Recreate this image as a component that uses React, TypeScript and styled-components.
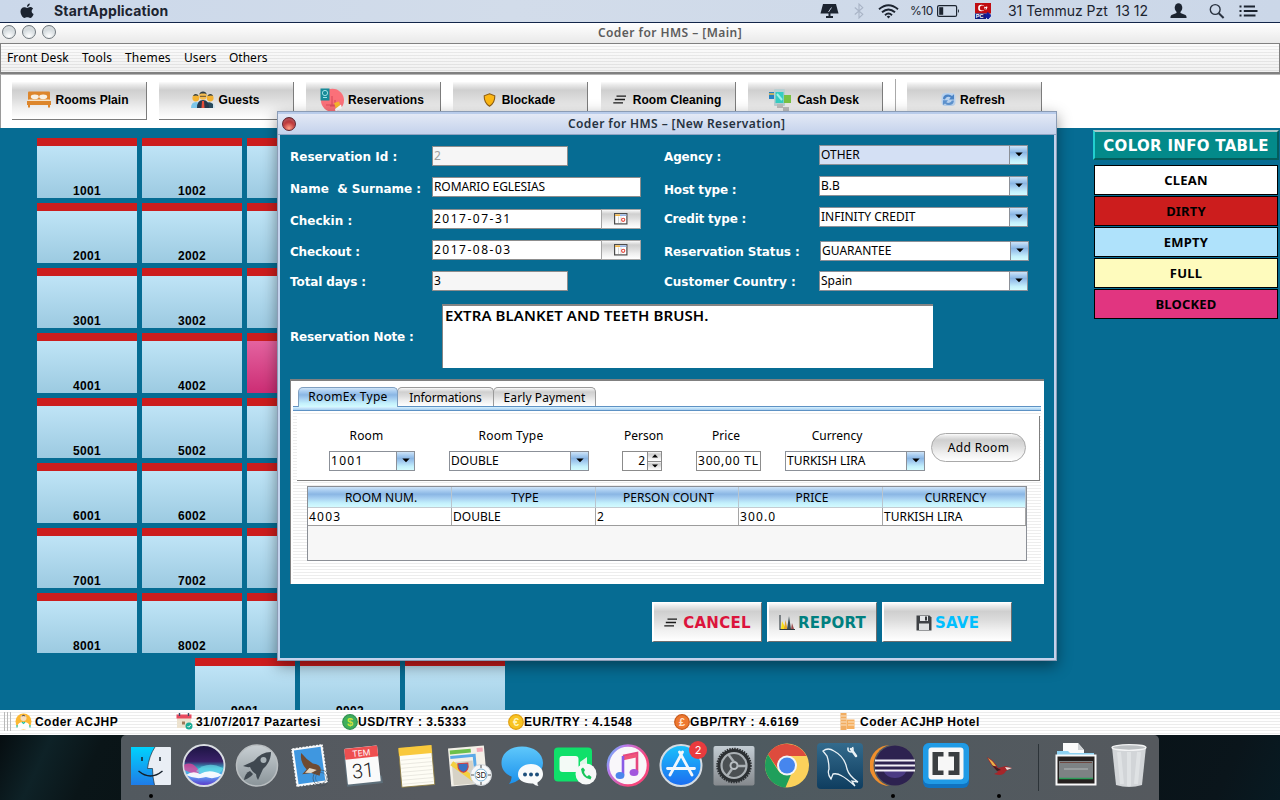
import React from "react";
import styled, { createGlobalStyle, css } from "styled-components";

const lucida = `"Noto Sans", "Open Sans", sans-serif`;
const verdana = `"DejaVu Sans", Verdana, sans-serif`;
const arial = `"Liberation Sans", Arial, sans-serif`;
const system = `Inter, Roboto, sans-serif`;
const teal = "#066c93";

const metal = "linear-gradient(#fbfbfb 0%, #e9e9e9 8%, #cfcfcf 22%, #dcdcdc 45%, #efefef 70%, #ffffff 100%)";
const aqua = "linear-gradient(#cfe4f8 0%, #a9cdf0 18%, #8ab6e4 36%, #a4cdf0 55%, #c3f0fc 80%, #d3fbff 100%)";
const stripes = "repeating-linear-gradient(#ffffff 0 2px, #ededed 2px 3px)";

const Global = createGlobalStyle`
  *, *::before, *::after { box-sizing: border-box; }
  html, body { margin: 0; padding: 0; background: #08161b; }
  svg { display: block; flex: none; }
`;

const Screen = styled.div`
  position: relative;
  display: flex;
  flex-direction: column;
  width: 1280px;
  height: 800px;
  overflow: hidden;
  color: #000;
  font: 12px/16px ${lucida};
  white-space: pre;
`;

/* ---------- system menu bar ---------- */

const SystemBar = styled.header`
  display: flex;
  align-items: center;
  height: 23px;
  flex: none;
  padding-left: 20px;
  background: linear-gradient(90deg, #cbd8ea, #d2dcea 40%, #cbd7e8);
  border-bottom: 1px solid #13264a;
  color: #1c2430;
  font-family: ${system};
`;

const AppName = styled.strong`
  margin-left: 20px;
  font-size: 14px;
  font-weight: 700;
  letter-spacing: 0.15px;
`;

const StatusIcons = styled.div`
  display: flex;
  align-items: center;
  margin-left: auto;
  padding-right: 22px;
`;

const Slot = styled.div<{ $gap: number }>`
  display: flex;
  align-items: center;
  margin-left: ${(p) => p.$gap}px;
`;

const Percent = styled.span`
  width: 23px;
  font-size: 12px;
  letter-spacing: -0.5px;
`;

const Clock = styled.span`
  width: 140px;
  font-size: 14px;
  letter-spacing: -0.03px;
`;

/* ---------- main window ---------- */

const Title = styled.h1<{ $dialog?: boolean }>`
  margin: 0;
  font: 600 12px/16px ${lucida};
  letter-spacing: ${(p) => (p.$dialog ? "0.4px" : "0.45px")};
  color: ${(p) => (p.$dialog ? "#26323f" : "#5c5c5c")};
`;

const WindowTitle = styled.div`
  position: relative;
  display: flex;
  align-items: center;
  justify-content: center;
  flex: none;
  height: 20px;
  padding-left: 60px;
  background: linear-gradient(#ffffff, #e9e9e9);
`;

const Lights = styled.div`
  position: absolute;
  left: 2px;
  top: 2px;
  display: flex;
  gap: 6px;
`;

const Light = styled.i<{ $red?: boolean }>`
  flex: none;
  width: 14px;
  height: 14px;
  border-radius: 50%;
  border: 1px solid ${(p) => (p.$red ? "#5d2530" : "#6f777d")};
  background: ${(p) =>
    p.$red
      ? "radial-gradient(circle at 50% 85%, #ff9f86, #c03a3c 50%, #8e2029)"
      : "radial-gradient(circle at 50% 85%, #ffffff, #d9dfe2 50%, #a9b2b8)"};
  box-shadow: inset 0 2px 2px rgba(255, 255, 255, ${(p) => (p.$red ? 0.2 : 0.45)});
`;

const MenuStrip = styled.nav`
  display: flex;
  align-items: center;
  flex: none;
  height: 31px;
  padding: 0 6px;
  gap: 13px;
  border: 1px solid #808080;
  border-bottom-width: 2px;
  background: linear-gradient(rgba(255, 255, 255, 0.3), rgba(200, 200, 200, 0.18)), repeating-linear-gradient(#fafafa 0 2px, #e4e4e4 2px 3px);
`;

const MenuEntry = styled.span<{ $width: number; $track: number }>`
  width: ${(p) => p.$width}px;
  letter-spacing: ${(p) => p.$track}px;
`;

const Toolbar = styled.div`
  display: flex;
  flex: none;
  height: 54px;
  padding: 7px 11px 0;
  gap: 12px;
  background: #fff;
  border-top: 1px solid #b5b5b5;
  border-left: 1px solid #9a9a9a;
`;

const ToolButton = styled.button<{ $gap?: number; $push?: number }>`
  display: flex;
  align-items: center;
  justify-content: center;
  gap: ${(p) => p.$gap ?? 4}px;
  width: 135px;
  height: 38px;
  margin-left: ${(p) => p.$push ?? 0}px;
  padding: 0 2px 2px 0;
  border: 0;
  border-right: 1px solid #7c7c7c;
  border-bottom: 1px solid #7c7c7c;
  background: ${metal};
  font: 700 12px/16px ${arial};
  letter-spacing: 0.04px;
  white-space: pre;
`;

const ToolDivider = styled.i`
  width: 1px;
  margin: -3px -1px 0 0;
  background: #a9a9a9;
`;

const Desk = styled.main`
  display: flex;
  justify-content: space-between;
  flex: none;
  height: 582px;
  overflow: hidden;
  background: ${teal};
`;

const Rooms = styled.section`
  display: flex;
  flex-direction: column;
  gap: 5px;
  padding: 10px 0 0 37px;
`;

const RoomRow = styled.div<{ $indent?: number }>`
  display: flex;
  flex: none;
  gap: 5px;
  padding-left: ${(p) => p.$indent ?? 0}px;
`;

const RoomTile = styled.div<{ $blocked?: boolean }>`
  display: flex;
  align-items: flex-end;
  justify-content: center;
  width: 100px;
  height: 60px;
  border-top: 8px solid #cc1d1d;
  background: ${(p) => (p.$blocked ? "linear-gradient(#e463a0, #cc2d74)" : "linear-gradient(#bfe4f6, #9ccae1)")};
  font: 700 12px/13px ${arial};
  letter-spacing: 0.3px;
`;

const Legend = styled.aside`
  display: flex;
  flex-direction: column;
  width: 187px;
  padding: 2px 1px 0 0;
`;

const LegendHead = styled.div`
  height: 30px;
  margin-bottom: 5px;
  border: 2px solid;
  border-color: #a9c6c8 #045c5c #045c5c #22cfcf;
  background: #038a8a;
  color: #fff;
  font: 700 15px/28px ${verdana};
  letter-spacing: 0.3px;
  text-align: center;
`;

const LegendItem = styled.div<{ $color: string }>`
  height: 30px;
  margin: 0 1px;
  margin-bottom: 1px;
  border: 1px solid #000;
  background: ${(p) => p.$color};
  font: 700 13px/29px ${lucida};
  letter-spacing: 0.2px;
  text-align: center;
`;

/* ---------- status strip ---------- */

const StatusStrip = styled.footer`
  display: flex;
  align-items: center;
  flex: none;
  height: 25px;
  padding: 0 0 2px 4px;
  background: repeating-linear-gradient(#ffffff 0 2px, #ececec 2px 3px);
  font: 700 12px/16px ${arial};
`;

const Grip = styled.i`
  width: 7px;
  height: 19px;
  border: solid #b9b9b9;
  border-width: 0 1px;
  background: linear-gradient(90deg, transparent 2px, #b9b9b9 2px 3px, transparent 3px);
`;

const StatusItem = styled.div<{ $width: number; $gap: number; $track: number }>`
  display: flex;
  align-items: center;
  gap: ${(p) => p.$gap}px;
  width: ${(p) => p.$width}px;
  letter-spacing: ${(p) => p.$track}px;
`;

/* ---------- reservation dialog ---------- */

const Dialog = styled.section`
  position: absolute;
  left: 277px;
  top: 111px;
  width: 780px;
  height: 550px;
  display: flex;
  flex-direction: column;
  border: 1px solid #8b9cb5;
  box-shadow: inset 0 0 0 2px #c3d2ec, 0 5px 14px rgba(0, 0, 0, 0.42);
  background: ${teal};
`;

const DialogTitle = styled.div`
  display: flex;
  align-items: center;
  flex: none;
  height: 23px;
  padding: 2px 3px 0 4px;
  gap: 272px;
  border-bottom: 1px solid #8fa3c2;
  background: linear-gradient(#b9cceb 0 2px, #e3e9f6 2px, #c4d2ec);
`;

const DialogBody = styled.div`
  flex: 1;
  display: flex;
  flex-direction: column;
  padding: 10px 12px 0;
`;

const FormColumns = styled.div`
  display: flex;
  align-items: flex-start;
  height: 159px;
`;

const Column = styled.div<{ $width: number; $top?: number }>`
  width: ${(p) => p.$width}px;
  padding-top: ${(p) => p.$top ?? 0}px;
`;

const FieldRow = styled.div<{ $after: number }>`
  display: flex;
  height: 20px;
  margin-bottom: ${(p) => p.$after}px;
`;

const Label = styled.label<{ $width: number; $drop?: number; $track?: number }>`
  width: ${(p) => p.$width}px;
  padding-top: ${(p) => p.$drop ?? 2}px;
  color: #fff;
  font: 700 12px/16px ${verdana};
  letter-spacing: ${(p) => p.$track ?? 0}px;
`;

const Input = styled.div<{ $width: number; $muted?: boolean; $track?: number; $readonly?: boolean }>`
  width: ${(p) => p.$width}px;
  height: 20px;
  padding-left: 1px;
  border: 1px solid #8d8d8d;
  background: ${(p) => (p.$muted || p.$readonly ? "#f6f6f6" : "#fff")};
  color: ${(p) => (p.$muted ? "#a0a0a0" : "#000")};
  line-height: 18px;
  letter-spacing: ${(p) => p.$track ?? 0}px;
  overflow: hidden;
`;

const PickerButton = styled.button`
  display: flex;
  align-items: center;
  justify-content: center;
  width: 40px;
  height: 20px;
  margin-left: -1px;
  padding: 0;
  border: 1px solid #a5a5a5;
  background: ${metal};
`;

const ComboBox = styled.div<{ $width: number; $active?: boolean; $track?: number; $shift?: number }>`
  display: flex;
  justify-content: space-between;
  width: ${(p) => p.$width}px;
  height: 20px;
  margin-left: ${(p) => p.$shift ?? 0}px;
  padding-left: 1px;
  border: 1px solid #8b9098;
  background: ${(p) => (p.$active ? "#d4e0f4" : "#fff")};
  line-height: 18px;
  letter-spacing: ${(p) => p.$track ?? 0}px;
`;

const ComboArrow = styled.span`
  display: flex;
  align-items: center;
  justify-content: center;
  width: 18px;
  padding-bottom: 1px;
  border-left: 1px solid #8b9098;
  background: ${aqua};
`;

const NoteRow = styled.div`
  display: flex;
  height: 75px;
`;

const NoteArea = styled.div`
  width: 491px;
  height: 64px;
  border: solid #858585;
  border-width: 2px 0 0 1px;
  padding-left: 2px;
  background: #fff;
  font: 600 15px/18px ${lucida};
  letter-spacing: 0.08px;
`;

const TabPanel = styled.div`
  display: flex;
  flex-direction: column;
  flex: none;
  width: 754px;
  height: 205px;
  padding: 6px 3px 3px 2px;
  border: solid #808080;
  border-width: 2px 0 0 1px;
  background: #fff;
`;

const Tabs = styled.div`
  display: flex;
  flex: none;
  height: 19px;
  padding-left: 5px;
`;

const Tab = styled.div<{ $width: number; $track: number; $active?: boolean }>`
  width: ${(p) => p.$width}px;
  height: ${(p) => (p.$active ? 20 : 19)}px;
  margin-right: -1px;
  border: 1px solid ${(p) => (p.$active ? "#7f9fc0" : "#9a9a9a")};
  border-bottom: 0;
  border-radius: 5px 5px 0 0;
  background: ${(p) => (p.$active ? aqua : metal)};
  line-height: ${(p) => (p.$active ? 17 : 19)}px;
  letter-spacing: ${(p) => p.$track}px;
  text-align: center;
  ${(p) => p.$active && css`position: relative; z-index: 1;`}
`;

const TabRule = styled.i`
  flex: none;
  height: 5px;
  border: solid #5e92c4;
  border-width: 1px 0;
  background: linear-gradient(#d8f2ff, #a5cdf0);
`;

const TabContent = styled.div`
  flex: 1;
  padding: 5px 1px 0 4px;
  background: ${stripes};
`;

const RoomForm = styled.div`
  display: flex;
  height: 65px;
  padding: 12px 0 0 32px;
  border: solid #7f7f7f;
  border-width: 0 1px 1px 0;
  background: #fff;
`;

const Cell = styled.div<{ $width: number; $gap: number }>`
  flex: none;
  width: ${(p) => p.$width}px;
  margin-right: ${(p) => p.$gap}px;
`;

const CellLabel = styled.div<{ $trim?: number; $lead?: number; $track?: number }>`
  height: 23px;
  padding-right: ${(p) => p.$trim ?? 0}px;
  padding-left: ${(p) => p.$lead ?? 0}px;
  line-height: 16px;
  letter-spacing: ${(p) => p.$track ?? 0.2}px;
  text-align: center;
`;

const Spinner = styled.div`
  display: flex;
  width: 40px;
  height: 20px;
  border: 1px solid #8b8b8b;
  line-height: 18px;
`;

const SpinnerValue = styled.span`
  flex: 1;
  padding-right: 2px;
  text-align: right;
`;

const SpinnerArrows = styled.span`
  display: flex;
  flex-direction: column;
  width: 14px;
  border-left: 1px solid #8b8b8b;
`;

const SpinnerArrow = styled.span`
  flex: 1;
  display: flex;
  align-items: center;
  justify-content: center;
  background: ${metal};
  & + & {
    border-top: 1px solid #8b8b8b;
  }
`;

const AddButton = styled.button`
  width: 95px;
  height: 29px;
  margin-top: 5px;
  padding: 0;
  border: 1px solid #a9a9a9;
  border-radius: 15px;
  background: ${metal};
  font: 12px/16px ${lucida};
  letter-spacing: 0.35px;
`;

const Table = styled.div`
  width: 720px;
  height: 75px;
  margin: 5px 0 0 10px;
  border: 1px solid #8b8f96;
  background: #f7f7f7;
`;

const TableRow = styled.div<{ $head?: boolean }>`
  display: grid;
  grid-template-columns: 144px 144px 143px 144px 143px;
  height: ${(p) => (p.$head ? 21 : 18)}px;
  border-bottom: 1px solid ${(p) => (p.$head ? "#c4ccd2" : "#9c9c9c")};
  background: ${(p) => (p.$head ? aqua : "#fff")};
`;

const TableCell = styled.div<{ $head?: boolean; $track?: number }>`
  border-right: 1px solid ${(p) => (p.$head ? "#b9c5cf" : "#a5a5a5")};
  padding-left: ${(p) => (p.$head ? 3 : 1)}px;
  line-height: ${(p) => (p.$head ? 21 : 17)}px;
  text-align: ${(p) => (p.$head ? "center" : "left")};
  letter-spacing: ${(p) => p.$track ?? 0}px;
`;

const Actions = styled.div`
  display: flex;
  gap: 5px;
  padding: 18px 0 0 362px;
`;

const Action = styled.button<{ $width: number; $color: string; $gap?: number }>`
  display: flex;
  align-items: center;
  justify-content: center;
  gap: ${(p) => p.$gap ?? 3}px;
  width: ${(p) => p.$width}px;
  height: 40px;
  padding: 1px 0 0;
  border: solid;
  border-width: 1px 1px 1px 2px;
  border-color: #fff #6e6e6e #6e6e6e #fff;
  background: ${metal};
  color: ${(p) => p.$color};
  font: 700 15px/20px ${verdana};
  letter-spacing: 0.25px;
`;

/* ---------- dock ---------- */

const DockArea = styled.div`
  flex: 1;
  padding-left: 121px;
  background: linear-gradient(115deg, #060d10, #0e2227 4%, #0a1518 8%, #050b0d 50%, #0a151b 95%, #081a22);
`;

const Dock = styled.div`
  display: flex;
  width: 1038px;
  height: 65px;
  padding-left: 3px;
  border-radius: 5px 5px 0 0;
  background: linear-gradient(90deg, #52595f, #565a60 30%, #4e5a60 60%, #55595e);
`;

const DockSlot = styled.div<{ $running?: boolean }>`
  position: relative;
  display: flex;
  flex-direction: column;
  align-items: center;
  width: 53px;
  padding-top: 8px;
  ${(p) =>
    p.$running &&
    css`
      &::after {
        content: "";
        width: 4px;
        height: 4px;
        margin-top: 5px;
        border-radius: 50%;
        background: #000;
      }
    `}
`;

const DockDivider = styled.i`
  width: 1px;
  height: 47px;
  margin: 9px 10px 0 13px;
  background: #2c3338;
`;

const Badge = styled.span`
  position: absolute;
  right: 0;
  top: 6px;
  width: 18px;
  height: 18px;
  border-radius: 50%;
  background: #e93b3e;
  color: #fff;
  font: 11px/18px ${system};
  text-align: center;
`;

/* ---------- small drawings ---------- */

const Apple = () => (
  <svg width="14" height="17" viewBox="0 0 14 17" fill="#1c2430">
    <path d="M9.8 0.6C9.9 2.2 8.6 3.8 7 3.9C6.8 2.3 8.3 0.7 9.8 0.6Z" />
    <path d="M7.1 4.9C7.9 4.9 8.8 4.1 10.2 4.1C11.4 4.1 12.5 4.8 13.1 5.7C11 7 11.3 10 13.6 10.9C13 12.8 11.6 15 10.2 15C9.1 15 8.6 14.3 7.3 14.3C6 14.3 5.4 15 4.4 15C2.7 15 .5 11.5 .5 8.6C.5 5.8 2.2 4.2 4.1 4.2C5.4 4.2 6.3 4.9 7.1 4.9Z" />
  </svg>
);
const Monitor = () => (
  <svg width="19" height="16" viewBox="0 0 19 16">
    <path d="M3 1H16L18.500 10.500H.5Z" fill="#1c2430" />
    <path d="M8.500 10H10.500V13H13V15H6V13H8.500Z" fill="#1c2430" />
    <path d="M8.500 9L11.500 4.500" stroke="#cfd9e9" strokeWidth=".9" />
  </svg>
);
const Bluetooth = () => (
  <svg width="10" height="16" viewBox="0 0 10 16" fill="none" stroke="#a9b4c6" strokeWidth="1.1">
    <path d="M.8 4.500L8.800 11.300L5 15V1L8.800 4.700L.8 11.500" />
  </svg>
);
const Wifi = () => (
  <svg width="21" height="15" viewBox="0 0 21 15" fill="none" stroke="#1c2430" strokeWidth="1.900">
    <path d="M1 5.200Q10.500 -2.800 20 5.200" />
    <path d="M4 8.300Q10.500 2.600 17 8.300" />
    <path d="M7 11.200Q10.500 8 14 11.200" />
    <path d="M10.500 14.500L8.700 12.600Q10.500 11 12.300 12.600Z" fill="#1c2430" stroke="none" />
  </svg>
);
const Battery = () => (
  <svg width="23" height="12" viewBox="0 0 23 12">
    <rect x=".6" y=".6" width="19" height="10.800" rx="1.500" fill="none" stroke="#1c2430" strokeWidth="1.200" />
    <rect x="2.200" y="2.200" width="4" height="7.600" fill="#1c2430" />
    <path d="M21 4Q23 6 21 8Z" fill="#1c2430" />
  </svg>
);
const Flag = () => (
  <svg width="16" height="16" viewBox="0 0 16 16">
    <rect width="16" height="10.500" fill="#c00d12" />
    <rect y="10.500" width="11" height="5.500" fill="#101c7c" />
    <circle cx="6.300" cy="5" r="3.200" fill="#fff" />
    <circle cx="7.300" cy="5" r="2.500" fill="#c00d12" />
    <path d="M9 5L12 3.800L11 6.500L12 4.500Z" stroke="#fff" fill="#fff" strokeWidth=".7" />
    <text x=".8" y="15.400" fontSize="5.500" fontWeight="700" fontFamily="Liberation Sans, sans-serif" fill="#fff">PC</text>
    <path d="M13 9.500L16 12.500L13 16L9.800 12.500Z" fill="#101c9c" stroke="#101c9c" />
  </svg>
);
const Person = () => (
  <svg width="17" height="16" viewBox="0 0 17 16" fill="#1c2430">
    <ellipse cx="8.500" cy="4.800" rx="3.800" ry="4.500" />
    <path d="M6.500 8H10.500V10L15.500 12Q16.600 12.600 16.600 15H.4Q.4 12.600 1.500 12L6.500 10Z" />
  </svg>
);
const Search = () => (
  <svg width="16" height="16" viewBox="0 0 16 16" fill="none" stroke="#2a3340" strokeWidth="1.400">
    <circle cx="6.200" cy="6.500" r="4.900" />
    <path d="M9.800 10.200L14.600 15" strokeWidth="2" />
  </svg>
);
const List = () => (
  <svg width="19" height="12" viewBox="0 0 19 12" stroke="#1c2430" strokeWidth="1.900">
    <path d="M.5 1.500H2.500M4.800 1.500H16M.5 6H2.500M4.800 6H18.500M.5 10.500H2.500M4.800 10.500H16.500" />
  </svg>
);

const Bed = () => (
  <svg width="24" height="17" viewBox="0 0 24 17">
    <rect x="1" y=".5" width="22" height="10" rx="1" fill="#dd862c" />
    <ellipse cx="7.800" cy="5.800" rx="4" ry="2.400" fill="#f8f1e4" />
    <ellipse cx="16.200" cy="5.800" rx="4" ry="2.400" fill="#f8f1e4" />
    <path d="M1.500 8.500H22.500L24 10.500H0Z" fill="#f6e3c8" />
    <path d="M0 10H24V14H23V16.500H21V14H3V16.500H1V14H0Z" fill="#dd862c" />
  </svg>
);
const People = () => (
  <svg width="24" height="17" viewBox="0 0 24 17">
    <path d="M0 17Q0 11 5 11Q10 11 10 17Z" fill="#7cc6ea" />
    <path d="M14 17Q14 11 19 11Q24 11 24 17Z" fill="#cfe3ee" />
    <path d="M15 17V12Q19 10 22 13V17Z" fill="#27495c" />
    <path d="M6 17Q6 9 12 9Q18 9 18 17Z" fill="#27394c" />
    <path d="M11 10H13L13.500 17H10.500Z" fill="#e34d3a" />
    <circle cx="4.800" cy="7" r="3.400" fill="#f3b233" />
    <circle cx="19.200" cy="7" r="3.400" fill="#f3b233" />
    <circle cx="12" cy="5" r="3.800" fill="#f7bd50" />
    <path d="M8.200 3.500Q9 .5 12 .5Q15 .5 15.800 3.500L14 2.500H10Z" fill="#2f3e46" />
    <path d="M2 5Q3 3 4.500 3Q7 3 7.500 5L5 4.500ZM16.500 5Q17.500 3 19.300 3Q21.500 3 22 5L20 4.500Z" fill="#2f3e46" />
    <path d="M9 5.300H15" stroke="#333" strokeWidth=".8" />
  </svg>
);
const Passport = () => (
  <svg width="24" height="24" viewBox="0 0 24 24">
    <circle cx="12.500" cy="12.300" r="11.500" fill="#fb7079" />
    <path d="M12 8V18M6 17H15V12M15 18H10" stroke="#dc4e5d" fill="none" strokeWidth="1.200" />
    <rect x=".5" y=".5" width="9" height="12" fill="#178a98" />
    <circle cx="5" cy="5" r="2.600" fill="none" stroke="#9fe0e4" />
    <path d="M3 9.500H7" stroke="#9fe0e4" />
    <path d="M14 15L19 13.500L20.500 18L16 21Z" fill="#f7b52c" />
    <path d="M15 21L21 16.500L22 20Q19 23 15.500 23.500Z" fill="#fff" />
  </svg>
);
const Shield = () => (
  <svg width="13" height="14" viewBox="0 0 13 14">
    <path d="M6.500 .8L11.800 2.800Q12 10 6.500 13.200Q1 10 1.200 2.800Z" fill="#fcb714" stroke="#8d5d13" strokeWidth="1.100" />
  </svg>
);
const Lines = () => (
  <svg width="14" height="9" viewBox="0 0 14 9" stroke="#1a1a1a" strokeWidth="1.300">
    <path d="M3.500 1.200H13M1.800 4.500H12M.3 7.800H10" />
  </svg>
);
const Cash = () => (
  <svg width="22" height="24" viewBox="0 0 22 24">
    <rect x="0" y="4" width="9" height="7" fill="#2781c2" />
    <path d="M0 6H9" stroke="#f2c14c" strokeWidth="1.500" />
    <rect x="5" y="1" width="11" height="17" rx="1" fill="#b8cfd2" />
    <rect x="6.500" y="4" width="8" height="11" fill="#35cdc2" />
    <path d="M8 6L13 12" stroke="#9ff1e8" strokeWidth="2" />
    <rect x="15" y="7" width="7" height="8" fill="#79c143" />
    <path d="M8 16H14V20H8ZM14 19H20V23H14Z" fill="#bcbcbc" />
  </svg>
);
const Refresh = () => (
  <svg width="15" height="15" viewBox="0 0 15 15">
    <rect x=".5" y="1" width="14" height="13" rx="4" fill="#b9d2ee" />
    <path d="M2 7Q2 2.500 7 2.500Q9.500 2.500 11 4L13 2.300V7.500H8L9.700 5.500Q8 4.200 6 5Q4.500 5.800 4 7.500Z" fill="#4b83c4" />
    <path d="M13 8.500Q12.500 13 8 13Q5.500 13 4 11.500L2 13V8.200H7L5.300 10.200Q7 11.500 9 10.500Q10.300 10 10.800 8.500Z" fill="#5e93cf" />
  </svg>
);
const CalendarGlyph = () => (
  <svg width="14" height="12" viewBox="0 0 14 12">
    <rect x=".6" y=".6" width="12.300" height="10.300" fill="#fff" stroke="#4c4c4c" strokeWidth="1.200" />
    <path d="M1 2.200H6" stroke="#f2b23c" strokeWidth="1.500" />
    <path d="M6 2.200H12.500" stroke="#93b3e6" strokeWidth="1.500" />
    <path d="M4.500 3.500V10M7 3.500V10" stroke="#d5d5d5" />
    <circle cx="9.200" cy="6.800" r="1.600" fill="#fff" stroke="#e4493f" strokeWidth="1.100" />
  </svg>
);
const Down = () => (
  <svg width="8" height="5" viewBox="0 0 8 5">
    <path d="M.3 .5H7.700L4 4.300Z" fill="#000" />
  </svg>
);
const Tiny = ({ up }: { up?: boolean }) => (
  <svg width="6" height="4" viewBox="0 0 6 4">
    <path d={up ? "M0 3.4L3 .3L6 3.4Z" : "M0 .4H6L3 3.6Z"} fill="#000" />
  </svg>
);
const Chart = () => (
  <svg width="16" height="16" viewBox="0 0 16 16">
    <path d="M2 14L3 6L5 10L7 14Z" fill="#f7de18" />
    <path d="M5 14L6.500 5L8.500 14Z" fill="#e5a52a" />
    <path d="M8 14L10 1L12 14Z" fill="#3d4f55" />
    <path d="M12 14L13 8L15 14Z" fill="#9c4d4d" />
    <path d="M1 0V14.500H16" stroke="#2f3a40" fill="none" strokeWidth="1.100" />
  </svg>
);
const Floppy = () => (
  <svg width="16" height="16" viewBox="0 0 16 16">
    <path d="M.5 .5H13.500L15.500 2.500V15.500H.5Z" fill="#3f4246" />
    <rect x="4" y="1" width="8" height="5" fill="#e4e6e8" />
    <rect x="9" y="1.500" width="2" height="4" fill="#34373a" />
    <rect x="3" y="8.500" width="10" height="6.500" fill="#dfe1e2" />
  </svg>
);
const UserRound = () => (
  <svg width="17" height="17" viewBox="0 0 17 17">
    <circle cx="8.500" cy="8.500" r="8" fill="#fcb732" />
    <circle cx="8.500" cy="5" r="3" fill="#f6ddbe" />
    <path d="M6.500 3.500Q7 1.800 8.500 1.800Q10 1.800 10.500 3.500L8.500 3Z" fill="#5c5550" />
    <path d="M2.500 16V13Q3 9 8.500 9Q14 9 14.500 13V16Z" fill="#fdfdfd" />
    <path d="M2 12V14.500M15 12V14.500M7 9L8.500 10.500L10 9" stroke="#23c1a5" strokeWidth="1.200" fill="none" />
  </svg>
);
const DateGlyph = () => (
  <svg width="17" height="17" viewBox="0 0 17 17">
    <rect x="1" y="5" width="14" height="10" fill="#ece2cf" />
    <rect x=".5" y="1.500" width="15" height="4" fill="#e84a5f" />
    <path d="M3.500 0V3M12.500 0V3" stroke="#3a4b66" strokeWidth="1.400" />
    <rect x="6" y="8.500" width="3" height="3" fill="#9d7b5b" />
    <circle cx="13" cy="13" r="3.500" fill="#1cac95" />
    <path d="M11.500 13L12.700 14.200L14.700 12" stroke="#fff" fill="none" />
  </svg>
);
const Coin = ({ fill, ring, sign, ink }: { fill: string; ring: string; sign: string; ink: string }) => (
  <svg width="16" height="16" viewBox="0 0 16 16">
    <circle cx="8" cy="8" r="7.300" fill={fill} stroke={ring} strokeWidth="1.200" />
    <text x="8" y="12" textAnchor="middle" fontSize="11" fontWeight="700" fontFamily="Liberation Sans, sans-serif" letterSpacing="0" fill={ink}>
      {sign}
    </text>
  </svg>
);
const Hotel = () => (
  <svg width="15" height="17" viewBox="0 0 15 17">
    <rect x=".5" y="0" width="6" height="17" fill="#f1ad62" />
    <rect x="6.500" y="6.500" width="8" height="9.500" fill="#f6b060" />
    <path d="M1 3H6.500M1 6H6.500M1 9H6.500M1 12H6.500M8 9H14M8 12H14" stroke="#fbe3c4" strokeWidth="1" />
  </svg>
);

/* ---------- dock drawings ---------- */

const Art = ({ children }: { children: React.ReactNode }) => (
  <svg width="46" height="46" viewBox="-1 -1 46 46">
    {children}
  </svg>
);

const Finder = () => (
  <Art>
    <defs>
      <linearGradient id="finderBlue" x2="0" y2="1">
        <stop stopColor="#00d2fd" />
        <stop offset="1" stopColor="#1f7ce8" />
      </linearGradient>
    </defs>
    <rect x="2" y="3" width="40" height="38" rx="1" fill="#e9eef5" />
    <path d="M2 3H26Q20 12 18.500 24.500H23.500Q23.500 33 25.500 41H2Z" fill="url(#finderBlue)" />
    <path d="M26 3Q20 12 18.500 24.500H23.500Q23.500 33 25.500 41" fill="none" stroke="#1d2c3a" strokeWidth=".7" />
    <path d="M13 13V17M31 13V17" stroke="#15202b" strokeWidth="1.500" />
    <path d="M9.500 27Q21.500 37 33.500 27" fill="none" stroke="#15202b" strokeWidth="1.400" />
  </Art>
);
const Siri = () => (
  <Art>
    <defs>
      <linearGradient id="siri" x2="0" y2="1">
        <stop stopColor="#1a1440" />
        <stop offset=".4" stopColor="#3a2168" />
        <stop offset=".58" stopColor="#35b5cf" />
        <stop offset=".75" stopColor="#5fa4f6" />
        <stop offset="1" stopColor="#5a32c8" />
      </linearGradient>
    </defs>
    <circle cx="22" cy="21.500" r="20.500" fill="url(#siri)" stroke="#d9dde2" strokeWidth="1.800" />
    <path d="M2 21Q9 17 15 24Q20 28 14 31Q7 28 2.500 26Z" fill="#e83f9a" opacity=".75" />
    <path d="M14 27Q25 16 41 24Q40 30 30 31Q20 32 14 27Z" fill="#6fe3ef" opacity=".6" />
    <path d="M4 31Q11 26 18 30Q28 24 40 31Q32 36 24 33Q14 36 4 31Z" fill="#fff" opacity=".92" />
  </Art>
);
const Rocket = () => (
  <Art>
    <defs>
      <linearGradient id="launch" x2="0" y2="1">
        <stop stopColor="#c9d0d4" />
        <stop offset="1" stopColor="#8a9499" />
      </linearGradient>
    </defs>
    <circle cx="22" cy="21.500" r="20.500" fill="url(#launch)" stroke="#b9bec1" strokeWidth="1.500" />
    <path d="M36 8Q26 8 19 17L8 22Q12 23.500 15 23Q17 28 21 30Q21 33 23 36L28 25Q36 18 36 8Z" fill="#3f4850" />
    <circle cx="28.500" cy="16" r="3" fill="#a9b3b8" />
    <path d="M15 27Q10 29 9 36Q15 34 18 30Z" fill="#3f4850" />
  </Art>
);
const Stamp = () => (
  <Art>
    <g transform="rotate(-8 22 21)">
      <rect x="5.500" y="2" width="32" height="39" fill="#f8f9fa" />
      <rect x="5.500" y="2" width="32" height="39" fill="none" stroke="#50585e" strokeWidth="1.300" strokeDasharray="1.200 2.200" />
      <rect x="8" y="4.500" width="27" height="34" fill="#3f97e0" />
      <path d="M15 8Q12 16 18 25L13 29L22 29L30 33L32 28Q33 22 25 20Q19 15 15 8Z" fill="#6f4a31" />
      <path d="M16 28L21 24L28 27L22 29Z" fill="#e4d6c2" />
    </g>
    <circle cx="33" cy="34" r="8" fill="none" stroke="#3f4c58" strokeWidth=".9" opacity=".7" />
    <circle cx="33" cy="34" r="5.500" fill="none" stroke="#3f4c58" strokeWidth=".9" opacity=".5" />
  </Art>
);
const Calendar = () => (
  <Art>
    <g transform="rotate(-6 22 21)">
      <path d="M4 9L4 41H40L39.500 34Z" fill="#5e6f7a" />
      <rect x="5" y="3" width="33" height="36" rx="1" fill="#fafafa" />
      <path d="M5 3H38V14H5Z" fill="#ee4f50" />
      <text x="21.500" y="12" textAnchor="middle" fontSize="8.500" fontFamily="Inter, sans-serif" fill="#fff">TEM</text>
      <text x="21.500" y="33.500" textAnchor="middle" fontSize="20" fontWeight="300" fontFamily="Roboto, sans-serif" fill="#222">31</text>
    </g>
  </Art>
);
const Notes = () => (
  <Art>
    <g transform="rotate(-5 22 21)">
      <rect x="6" y="3" width="33" height="39" fill="#fefdf5" stroke="#8c7a3b" strokeWidth=".8" />
      <rect x="6" y="2.500" width="33" height="8" fill="#f9c93c" />
      {[15, 19, 23, 27, 31, 35, 39].map((y) => (
        <path key={y} d={`M7 ${y}H38`} stroke="#e2e0d8" strokeWidth=".7" />
      ))}
    </g>
  </Art>
);
const Maps = () => (
  <Art>
    <g transform="rotate(-5 20 21)">
      <rect x="2.500" y="3" width="36" height="38" fill="#f3f0e8" />
      <path d="M4 5H25V9H4Z" fill="#6cc04c" />
      <path d="M31 5H37V9H31Z" fill="#f2a9b8" />
      <path d="M4 12H28V41" fill="none" stroke="#5ba9e8" strokeWidth="3" />
      <path d="M5 17H26V40H5Z" fill="#d6d2c6" />
      <path d="M5 18L26 36" stroke="#f4d041" strokeWidth="5" />
      <path d="M11 19H21V23Q20 27 16 28Q12 27 11 23Z" fill="#3971c2" stroke="#d83c3c" />
    </g>
    <circle cx="34" cy="31" r="10.500" fill="#f7f8f9" stroke="#cfd4d8" />
    <circle cx="34" cy="31" r="6" fill="#fff" stroke="#6aa9cf" strokeWidth=".9" />
    <path d="M34 21V24M34 38V41M24 31H27M41 31H44" stroke="#555" strokeWidth="1.100" />
    <text x="34" y="34" textAnchor="middle" fontSize="8" fontFamily="Inter, sans-serif" fill="#222">3D</text>
  </Art>
);
const Messages = () => (
  <Art>
    <defs>
      <linearGradient id="chat" x2="0" y2="1">
        <stop stopColor="#5fc8fb" />
        <stop offset="1" stopColor="#1a90ec" />
      </linearGradient>
    </defs>
    <path d="M22 2.500C33.500 2.500 43 9 43 19C43 29 33.500 35.500 20 35Q15 39 9 40Q12 36 11.500 32.500C5 30 1.500 25 1.500 19C1.500 9 10.500 2.500 22 2.500Z" fill="url(#chat)" />
    <path d="M31 20C38.500 20 43 24.500 43 30C43 34 40.500 36.500 37.500 38.500Q37 40 38.500 42Q35 41.500 33 39.500C24 40 18 36 18 30.500C18 24.500 23.500 20 31 20Z" fill="#f8fafb" />
    <g fill="#1d4f7c">
      <circle cx="25" cy="30.500" r="2" />
      <circle cx="31" cy="30.500" r="2" />
      <circle cx="37" cy="30.500" r="2" />
    </g>
  </Art>
);
const FaceTime = () => (
  <Art>
    <rect x="1" y="3.500" width="38" height="34" rx="4" fill="#0fe06a" />
    <rect x="6.500" y="12" width="19" height="16" rx="3" fill="#f3faf6" />
    <path d="M27 18L34 13V27L27 22Z" fill="#dff6e8" />
    <circle cx="33" cy="30" r="10.500" fill="#f6f8f7" />
    <path d="M28 25Q29 34 37.500 35.500L38.500 33L36 31L34 32.500Q31.500 30.500 31 28L32 26L30 23.500Z" fill="#18c65b" />
  </Art>
);
const Music = () => (
  <Art>
    <defs>
      <linearGradient id="tune" x2="1" y2=".6">
        <stop stopColor="#4fc0f4" />
        <stop offset=".3" stopColor="#b77cf0" />
        <stop offset=".8" stopColor="#f5467d" />
      </linearGradient>
    </defs>
    <circle cx="22" cy="21.500" r="20" fill="#f9f7fa" stroke="url(#tune)" strokeWidth="2.600" />
    <path d="M17 12L31 9V28" fill="none" stroke="#e6477f" strokeWidth="2.600" />
    <path d="M17 14.500L31 11.500" stroke="#f0557a" strokeWidth="3.500" />
    <path d="M17 12V31" stroke="#8a5be6" strokeWidth="2.600" />
    <ellipse cx="14" cy="31.500" rx="4.400" ry="3.500" fill="#4b86ec" />
    <ellipse cx="28" cy="28.500" rx="4.400" ry="3.500" fill="#a257dd" />
  </Art>
);
const Store = () => (
  <Art>
    <defs>
      <linearGradient id="store" x2="0" y2="1">
        <stop stopColor="#1cc2fb" />
        <stop offset="1" stopColor="#1c6cf0" />
      </linearGradient>
    </defs>
    <circle cx="22" cy="21.500" r="20.500" fill="url(#store)" stroke="#d6dce2" strokeWidth="2" />
    <g stroke="#f2f7fc" strokeWidth="2.800" fill="none" strokeLinecap="round">
      <path d="M23.500 8L11 31M20.500 8L33 31M8.500 24.500H35.500" />
    </g>
  </Art>
);
const Settings = () => (
  <Art>
    <defs>
      <linearGradient id="steel" x2="0" y2="1">
        <stop stopColor="#c3cdd4" />
        <stop offset="1" stopColor="#85898d" />
      </linearGradient>
    </defs>
    <rect x="1.500" y="2" width="41" height="39.500" rx="2" fill="url(#steel)" />
    <circle cx="22" cy="21.500" r="16.500" fill="#2c3033" stroke="#2c3033" strokeWidth="2.500" strokeDasharray="1.500 1" />
    <circle cx="22" cy="21.500" r="12.500" fill="#4b5053" stroke="#aab0b4" strokeWidth="2.200" />
    <circle cx="22" cy="21.500" r="3.500" fill="none" stroke="#b9bfc3" strokeWidth="2" />
    <path d="M22 18L16 10M25.500 22H34M20 25L15 32" stroke="#aab0b4" strokeWidth="2.400" />
  </Art>
);
const Chrome = () => (
  <Art>
    <circle cx="22" cy="21.500" r="22" fill="#fbd15b" />
    <path d="M3 10.500A22 22 0 0 1 41.500 12H22Q15 12 13 25Z" fill="#de4b3d" />
    <path d="M3 10.500L13.500 27Q17 32 26 30.500L20.500 43.500A22 22 0 0 1 3 10.500Z" fill="#1f9f5b" />
    <circle cx="22" cy="21.500" r="10" fill="#f4f6f8" />
    <circle cx="22" cy="21.500" r="8" fill="#4686ee" />
  </Art>
);
const Dolphin = () => (
  <Art>
    <defs>
      <linearGradient id="sea" x2="0" y2="1">
        <stop stopColor="#336b8d" />
        <stop offset="1" stopColor="#0f3d5f" />
      </linearGradient>
    </defs>
    <rect x="-1" y="-1" width="46" height="46" rx="4" fill="url(#sea)" />
    <path d="M5 7Q10 3 16 7Q27 13 29 25Q31 32 40 38L34 37L37 42Q28 34 24 32Q19 29 15 30L13 35Q9 30 11 25Q11 18 9 12Z" fill="none" stroke="#eaf2f6" strokeWidth="1.300" />
    <path d="M33 5L38 12" stroke="#eaf2f6" strokeWidth="2.600" strokeLinecap="round" />
    <path d="M30 3.500Q29.500 8 33 8Q36 6.500 34.500 3" stroke="#eaf2f6" strokeWidth="1.600" fill="none" />
  </Art>
);
const Eclipse = () => (
  <Art>
    <circle cx="19" cy="21.500" r="20.500" fill="#f08f2d" />
    <circle cx="24" cy="21.500" r="21.500" fill="#53595f" />
    <circle cx="24" cy="21.500" r="20" fill="#2d2250" />
    <path d="M12 26A13 13 0 0 0 36 26Z" fill="#4b3b84" />
    <path d="M4 16.500H44M4 21.500H44M4 26.500H44" stroke="#f3f0f7" strokeWidth="2.200" />
  </Art>
);
const Brackets = () => (
  <Art>
    <rect x="-1" y="-1" width="46" height="45" rx="6" fill="#1173c0" />
    <rect x="-1" y="-1" width="46" height="41" rx="6" fill="#209be6" />
    <rect x="4.500" y="3.500" width="35" height="32" rx="3" fill="#f7f7f7" />
    <path d="M19.500 8H8.500V31H19.500V26.500H14V12.500H19.500ZM24.500 8H35.500V31H24.500V26.500H30V12.500H24.500Z" fill="#3a3e41" />
  </Art>
);
const Bird = () => (
  <Art>
    <path d="M10 13Q17 16 21 24L29 22L35 24L29 27Q26 33 17 30L21 28Q14 22 10 13Z" fill="#a6262a" />
    <path d="M11 14Q16 17 19 22L16 22Z" fill="#e9b648" />
    <path d="M28 23L35 24L30 26Z" fill="#e8e2dc" />
    <path d="M15 21L20 27L24 26Z" fill="#3d2021" />
  </Art>
);
const FolderStack = () => (
  <Art>
    <path d="M9 -1H24L30 6V14H9Z" fill="#fbfbfb" />
    <path d="M24 -1V6H30Z" fill="#cfd3d6" />
    <path d="M3 7H14L16 9H40V14H3Z" fill="#8fd2f2" />
    <rect x="1.500" y="10.500" width="41" height="31" fill="#fafafa" />
    <rect x="3.500" y="12.500" width="37" height="27" fill="#25201f" />
    <rect x="5" y="17" width="34" height="17" fill="#7d8284" />
    <path d="M6 18.500H38" stroke="#6e4840" />
    <path d="M10 25H34" stroke="#aab0b0" strokeWidth="1.200" />
    <path d="M5 34.500H39" stroke="#2c9c58" strokeWidth="1.600" />
  </Art>
);
const Trash = () => (
  <Art>
    <path d="M5 3H39L35 41Q22 45 9 41Z" fill="#d9dcde" opacity=".95" />
    <path d="M12 8L15 40M32 8L29 40M22 8V42" stroke="#e9ebed" strokeWidth="4" opacity=".6" />
    <ellipse cx="22" cy="3.500" rx="17" ry="2.800" fill="#bcc0c3" stroke="#f3f4f5" strokeWidth="1.300" />
  </Art>
);

const dockApps = [
  { art: <Finder />, running: true },
  { art: <Siri /> },
  { art: <Rocket /> },
  { art: <Stamp /> },
  { art: <Calendar /> },
  { art: <Notes /> },
  { art: <Maps /> },
  { art: <Messages /> },
  { art: <FaceTime /> },
  { art: <Music /> },
  { art: <Store />, badge: "2" },
  { art: <Settings /> },
  { art: <Chrome /> },
  { art: <Dolphin /> },
  { art: <Eclipse />, running: true },
  { art: <Brackets /> },
  { art: <Bird />, running: true },
];

/* ---------- composed parts ---------- */

const Combo = ({ value, ...rest }: { value: string; $width: number; $active?: boolean; $track?: number; $shift?: number }) => (
  <ComboBox {...rest}>
    {value}
    <ComboArrow>
      <Down />
    </ComboArrow>
  </ComboBox>
);

const menus = [
  { name: "Front Desk", width: 62, track: 0.1 },
  { name: "Tools", width: 30, track: 0.2 },
  { name: "Themes", width: 46, track: 0.2 },
  { name: "Users", width: 32, track: 0.1 },
  { name: "Others", width: 40, track: 0.0 },
];

const tools = [
  { name: "Rooms Plain", icon: <Bed /> },
  { name: "Guests", icon: <People /> },
  { name: "Reservations", icon: <Passport /> },
  { name: "Blockade", icon: <Shield />, gap: 6 },
  { name: "Room Cleaning", icon: <Lines />, gap: 6, push: 1 },
  { name: "Cash Desk", icon: <Cash />, gap: 6 },
];

const legend = [
  ["CLEAN", "#ffffff"],
  ["DIRTY", "#cc1d1d"],
  ["EMPTY", "#afe2fb"],
  ["FULL", "#fefbbd"],
  ["BLOCKED", "#e13580"],
];

export default function App() {
  return (
    <Screen>
      <Global />
      <SystemBar>
        <Apple />
        <AppName>StartApplication</AppName>
        <StatusIcons>
          <Slot $gap={0}><Monitor /></Slot>
          <Slot $gap={15}><Bluetooth /></Slot>
          <Slot $gap={14}><Wifi /></Slot>
          <Slot $gap={11}><Percent>%10</Percent></Slot>
          <Slot $gap={4}><Battery /></Slot>
          <Slot $gap={15}><Flag /></Slot>
          <Slot $gap={17}><Clock>31 Temmuz Pzt  13 12</Clock></Slot>
          <Slot $gap={22}><Person /></Slot>
          <Slot $gap={22}><Search /></Slot>
          <Slot $gap={14}><List /></Slot>
        </StatusIcons>
      </SystemBar>

      <WindowTitle>
        <Lights>
          <Light />
          <Light />
          <Light />
        </Lights>
        <Title>Coder for HMS – [Main]</Title>
      </WindowTitle>
      <MenuStrip>
        {menus.map((m) => (
          <MenuEntry key={m.name} $width={m.width} $track={m.track}>{m.name}</MenuEntry>
        ))}
      </MenuStrip>
      <Toolbar>
        {tools.map((t) => (
          <ToolButton key={t.name} $gap={t.gap} $push={t.push}>
            {t.icon}
            {t.name}
          </ToolButton>
        ))}
        <ToolDivider />
        <ToolButton>
          <Refresh />
          Refresh
        </ToolButton>
      </Toolbar>

      <Desk>
        <Rooms>
          {[1, 2, 3, 4, 5, 6, 7, 8].map((floor) => (
            <RoomRow key={floor}>
              <RoomTile>{floor}001</RoomTile>
              <RoomTile>{floor}002</RoomTile>
              <RoomTile $blocked={floor === 4} />
            </RoomRow>
          ))}
          <RoomRow $indent={158}>
            <RoomTile>9001</RoomTile>
            <RoomTile>9002</RoomTile>
            <RoomTile>9003</RoomTile>
          </RoomRow>
        </Rooms>
        <Legend>
          <LegendHead>COLOR INFO TABLE</LegendHead>
          {legend.map(([name, color]) => (
            <LegendItem key={name} $color={color}>{name}</LegendItem>
          ))}
        </Legend>
      </Desk>

      <StatusStrip>
        <Grip />
        <StatusItem $width={165} $gap={3} $track={0.45}>
          <Slot $gap={4}><UserRound /></Slot>
          Coder ACJHP
        </StatusItem>
        <StatusItem $width={166} $gap={3} $track={0.43}>
          <DateGlyph />
          31/07/2017 Pazartesi
        </StatusItem>
        <StatusItem $width={166} $gap={0} $track={0.57}>
          <Coin fill="#3fae5c" ring="#2f9350" sign="$" ink="#c9e23c" />
          USD/TRY : 3.5333
        </StatusItem>
        <StatusItem $width={166} $gap={0} $track={0.57}>
          <Coin fill="#f8c321" ring="#e0a011" sign="€" ink="#fff3b8" />
          EUR/TRY : 4.1548
        </StatusItem>
        <StatusItem $width={166} $gap={0} $track={0.57}>
          <Coin fill="#ee7830" ring="#c95a1b" sign="£" ink="#ffe3cf" />
          GBP/TRY : 4.6169
        </StatusItem>
        <StatusItem $width={160} $gap={5} $track={0.5}>
          <Hotel />
          Coder ACJHP Hotel
        </StatusItem>
      </StatusStrip>

      <DockArea>
        <Dock>
          {dockApps.map((a, i) => (
            <DockSlot key={i} $running={a.running}>
              {a.art}
              {a.badge && <Badge>{a.badge}</Badge>}
            </DockSlot>
          ))}
          <DockDivider />
          <DockSlot><FolderStack /></DockSlot>
          <DockSlot><Trash /></DockSlot>
        </Dock>
      </DockArea>

      <Dialog>
        <DialogTitle>
          <Light $red />
          <Title $dialog>Coder for HMS – [New Reservation]</Title>
        </DialogTitle>
        <DialogBody>
          <FormColumns>
            <Column $width={374} $top={1}>
              <FieldRow $after={11}>
                <Label $width={142} $drop={3}>Reservation Id :</Label>
                <Input $width={136} $muted $track={0.5}>2</Input>
              </FieldRow>
              <FieldRow $after={12}>
                <Label $width={142} $drop={4}>{"Name  & Surname :"}</Label>
                <Input $width={209} $track={-0.1}>ROMARIO EGLESIAS</Input>
              </FieldRow>
              <FieldRow $after={11}>
                <Label $width={142} $drop={4}>Checkin :</Label>
                <Input $width={170} $track={1.5}>2017-07-31</Input>
                <PickerButton><CalendarGlyph /></PickerButton>
              </FieldRow>
              <FieldRow $after={11}>
                <Label $width={142} $drop={4} $track={-0.2}>Checkout :</Label>
                <Input $width={170} $track={1.5}>2017-08-03</Input>
                <PickerButton><CalendarGlyph /></PickerButton>
              </FieldRow>
              <FieldRow $after={0}>
                <Label $width={142} $drop={3} $track={-0.1}>Total days :</Label>
                <Input $width={136} $readonly>3</Input>
              </FieldRow>
            </Column>
            <Column $width={380}>
              <FieldRow $after={11}>
                <Label $width={155} $drop={4} $track={-0.15}>Agency :</Label>
                <Combo $width={209} $active value="OTHER" />
              </FieldRow>
              <FieldRow $after={11}>
                <Label $width={155} $drop={6} $track={-0.2}>Host type :</Label>
                <Combo $width={209} value="B.B" />
              </FieldRow>
              <FieldRow $after={14}>
                <Label $width={155} $drop={4} $track={-0.2}>Credit type :</Label>
                <Combo $width={209} value="INFINITY CREDIT" />
              </FieldRow>
              <FieldRow $after={10}>
                <Label $width={155} $drop={3} $track={-0.13}>Reservation Status :</Label>
                <Combo $width={209} $shift={1} value="GUARANTEE" />
              </FieldRow>
              <FieldRow $after={0}>
                <Label $width={155} $drop={3}>Customer Country :</Label>
                <Combo $width={209} value="Spain" />
              </FieldRow>
            </Column>
          </FormColumns>
          <NoteRow>
            <Label $width={152} $drop={25} $track={-0.15}>Reservation Note :</Label>
            <NoteArea>EXTRA BLANKET AND TEETH BRUSH.</NoteArea>
          </NoteRow>
          <TabPanel>
            <Tabs>
              <Tab $width={100} $track={0.3} $active>RoomEx Type</Tab>
              <Tab $width={97} $track={-0.1}>Informations</Tab>
              <Tab $width={103} $track={0.1}>Early Payment</Tab>
            </Tabs>
            <TabRule />
            <TabContent>
              <RoomForm>
                <Cell $width={86} $gap={34}>
                  <CellLabel $trim={11}>Room</CellLabel>
                  <Combo $width={86} $track={1.3} value="1001" />
                </Cell>
                <Cell $width={140} $gap={33}>
                  <CellLabel $trim={16}>Room Type</CellLabel>
                  <Combo $width={140} value="DOUBLE" />
                </Cell>
                <Cell $width={40} $gap={34}>
                  <CellLabel $lead={2} $track={0}>Person</CellLabel>
                  <Spinner>
                    <SpinnerValue>2</SpinnerValue>
                    <SpinnerArrows>
                      <SpinnerArrow><Tiny up /></SpinnerArrow>
                      <SpinnerArrow><Tiny /></SpinnerArrow>
                    </SpinnerArrows>
                  </Spinner>
                </Cell>
                <Cell $width={65} $gap={24}>
                  <CellLabel $trim={5} $track={0}>Price</CellLabel>
                  <Input $width={65} $track={0.8}>300,00 TL</Input>
                </Cell>
                <Cell $width={140} $gap={6}>
                  <CellLabel $trim={36} $track={0}>Currency</CellLabel>
                  <Combo $width={140} value="TURKISH LIRA" />
                </Cell>
                <AddButton>Add Room</AddButton>
              </RoomForm>
              <Table>
                <TableRow $head>
                  {["ROOM NUM.", "TYPE", "PERSON COUNT", "PRICE", "CURRENCY"].map((h) => (
                    <TableCell key={h} $head>{h}</TableCell>
                  ))}
                </TableRow>
                <TableRow>
                  <TableCell $track={1.2}>4003</TableCell>
                  <TableCell>DOUBLE</TableCell>
                  <TableCell>2</TableCell>
                  <TableCell $track={1.1}>300.0</TableCell>
                  <TableCell>TURKISH LIRA</TableCell>
                </TableRow>
              </Table>
            </TabContent>
          </TabPanel>
          <Actions>
            <Action $width={110} $color="#dc143c" $gap={5}><Lines />CANCEL</Action>
            <Action $width={110} $color="#008080"><Chart />REPORT</Action>
            <Action $width={130} $color="#00bfff"><Floppy />SAVE</Action>
          </Actions>
        </DialogBody>
      </Dialog>
    </Screen>
  );
}
